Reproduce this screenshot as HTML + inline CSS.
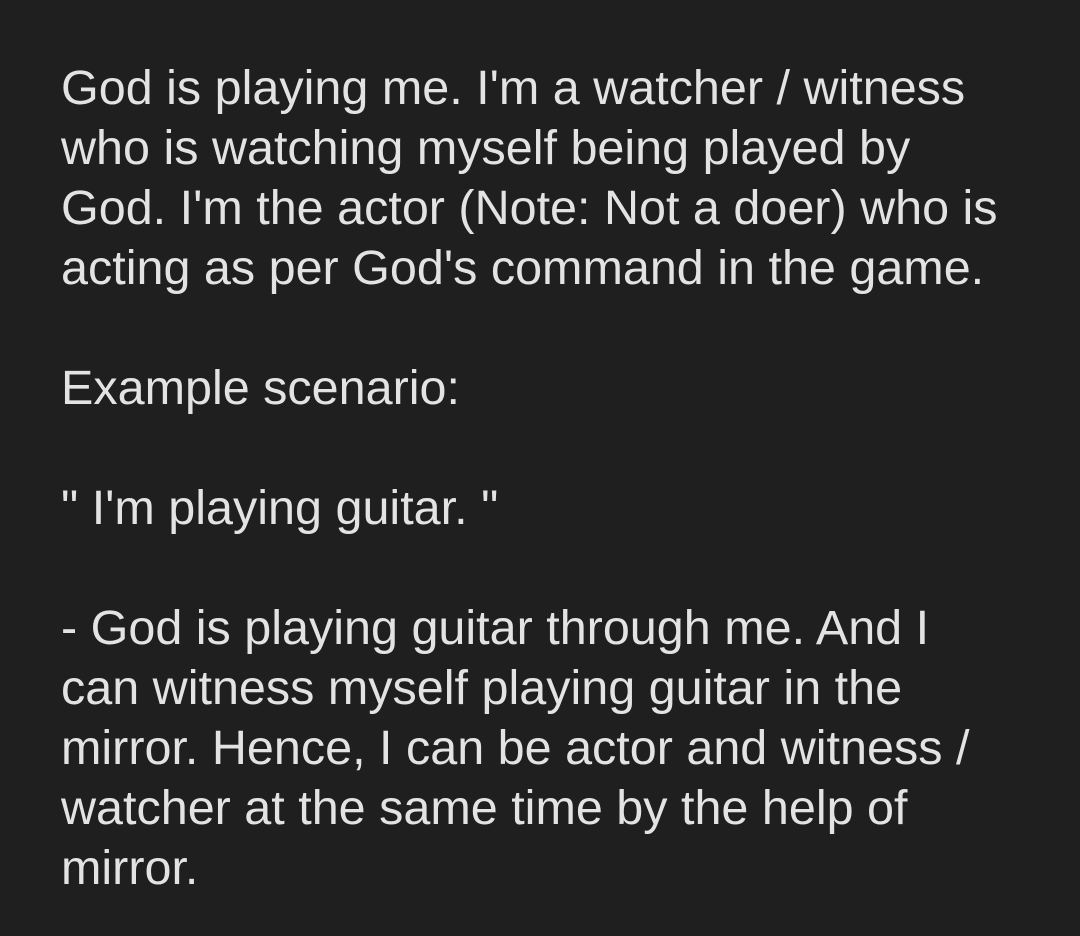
<!DOCTYPE html>
<html><head><style>
html,body{margin:0;padding:0;background:#1f1f1f;width:1080px;height:936px;overflow:hidden}
.t{position:absolute;left:61px;top:58px;font-family:"Liberation Sans",Arial,sans-serif;font-size:48.5px;line-height:60px;color:#e3e3e3;white-space:pre}
</style></head><body>
<div class="t">God is playing me. I'm a watcher / witness
who is watching myself being played by
God. I'm the actor (Note: Not a doer) who is
acting as per God's command in the game.

Example scenario:

" I'm playing guitar. "

- God is playing guitar through me. And I
can witness myself playing guitar in the
mirror. Hence, I can be actor and witness /
watcher at the same time by the help of
mirror.</div>
</body></html>
